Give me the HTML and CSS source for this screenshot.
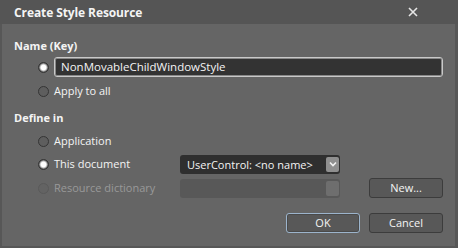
FILE: index.html
```html
<!DOCTYPE html>
<html>
<head>
<meta charset="utf-8">
<link rel="stylesheet" href="styles.css">
</head>
<body>
<div class="dialog">
  <div class="titlebar">
    <span class="title">Create Style Resource</span>
    <svg class="close" width="10" height="10" viewBox="0 0 10 10"><path d="M1 1L9 9M9 1L1 9" stroke="#e6e6e6" stroke-width="1.6"/></svg>
  </div>
  <div class="content">
    <div class="heading h1">Name (Key)</div>
    <div class="row r-name">
      <span class="radio checked"></span>
      <div class="textbox">NonMovableChildWindowStyle</div>
    </div>
    <div class="row r-apply">
      <span class="radio"></span>
      <span class="label">Apply to all</span>
    </div>
    <div class="heading h2">Define in</div>
    <div class="row r-app">
      <span class="radio"></span>
      <span class="label">Application</span>
    </div>
    <div class="row r-doc">
      <div class="opt">
        <span class="radio checked"></span>
        <span class="label">This document</span>
      </div>
      <div class="combo">
        <span class="combo-text">UserControl: &lt;no name&gt;</span>
        <span class="combo-btn"><svg width="8" height="6" viewBox="0 0 8 6"><path d="M1 1.5L4 4.5L7 1.5" fill="none" stroke="#f2f2f2" stroke-width="1.6"/></svg></span>
      </div>
    </div>
    <div class="row r-dict">
      <div class="opt">
        <span class="radio disabled"></span>
        <span class="label disabled-text">Resource dictionary</span>
      </div>
      <div class="combo disabled-combo">
        <span class="combo-text"></span>
        <span class="combo-btn"></span>
      </div>
      <button class="btn btn-new">New...</button>
    </div>
    <div class="actions">
      <button class="btn btn-ok">OK</button>
      <button class="btn">Cancel</button>
    </div>
  </div>
</div>
</body>
</html>
```

FILE: styles.css
```css
html, body {
  margin: 0;
  padding: 0;
  background: #575757;
}
body {
  font-family: "Open Sans", "Noto Sans", sans-serif;
  font-size: 11px;
  color: #f4f4f4;
}
.dialog {
  width: 453px;
  height: 246px;
  margin-left: 2px;
  background: #656565;
  display: flex;
  flex-direction: column;
}
.titlebar {
  height: 24px;
  margin-left: -2px;
  width: 458px;
  background: #555555;
  display: flex;
  align-items: center;
  justify-content: space-between;
  box-sizing: border-box;
  padding: 0 40px 0 14px;
}
.title {
  font-weight: 700;
  font-size: 12px;
  letter-spacing: -0.1px;
}
.close {
  display: block;
}
.content {
  display: flex;
  flex-direction: column;
  padding-left: 12px;
}
.heading {
  font-weight: 700;
  height: 16px;
  line-height: 16px;
}
.h1 { margin-top: 14px; }
.h2 { margin-top: 9px; }
.row {
  display: flex;
  align-items: center;
  height: 20px;
  padding-left: 25px;
}
.r-name { margin-top: 3px; }
.r-apply { margin-top: 4px; }
.r-app { margin-top: 5px; }
.r-doc { margin-top: 3px; }
.r-dict { margin-top: 4px; }
.radio {
  width: 11px;
  height: 11px;
  border-radius: 50%;
  border: 1px solid #353535;
  background: #5e5e5e;
  box-sizing: border-box;
  flex: none;
  margin-right: 5px;
  margin-left: -1px;
}
.radio.checked {
  background: radial-gradient(circle, #ffffff 0 2.5px, #d8d8d8 3px, #5e5e5e 4.5px);
}
.radio.disabled {
  border-color: #5a5a5a;
  background: #636363;
}
.textbox {
  width: 389px;
  height: 20px;
  box-sizing: border-box;
  border: 1px solid #c9c9c9;
  box-shadow: inset 0 0 0 1px #888;
  border-radius: 3px;
  background: #333333;
  padding-left: 6px;
  line-height: 18px;
  margin-left: 0;
  font-size: 11.5px;
}
.label { line-height: 16px; }
.disabled-text { color: #999999; }
.opt {
  display: flex;
  align-items: center;
  width: 141px;
}
.combo {
  width: 160px;
  height: 19px;
  border-radius: 3px;
  background: #2f2f2f;
  display: flex;
  align-items: center;
  justify-content: space-between;
  padding: 0 1px 0 7px;
  box-sizing: border-box;
}
.combo-text { line-height: 17px; }
.combo-btn {
  width: 13px;
  height: 15px;
  background: #8f8f8f;
  border-radius: 2px;
  display: flex;
  align-items: center;
  justify-content: center;
}
.disabled-combo {
  background: #585858;
}
.disabled-combo .combo-btn {
  background: #6e6e6e;
}
.btn {
  font-family: inherit;
  font-size: 11px;
  color: #f4f4f4;
  width: 74px;
  height: 20px;
  background: #585858;
  border: 1px solid #3c3c3c;
  border-radius: 3px;
  padding: 0;
  line-height: 18px;
}
.btn-new { margin-left: 29px; }
.actions {
  display: flex;
  justify-content: flex-end;
  gap: 9px;
  margin-top: 15px;
  padding-right: 12px;
}
.btn-ok {
  border-color: #9cb4cc;
  box-shadow: inset 0 0 0 1px #4a4a4a;
}
```
